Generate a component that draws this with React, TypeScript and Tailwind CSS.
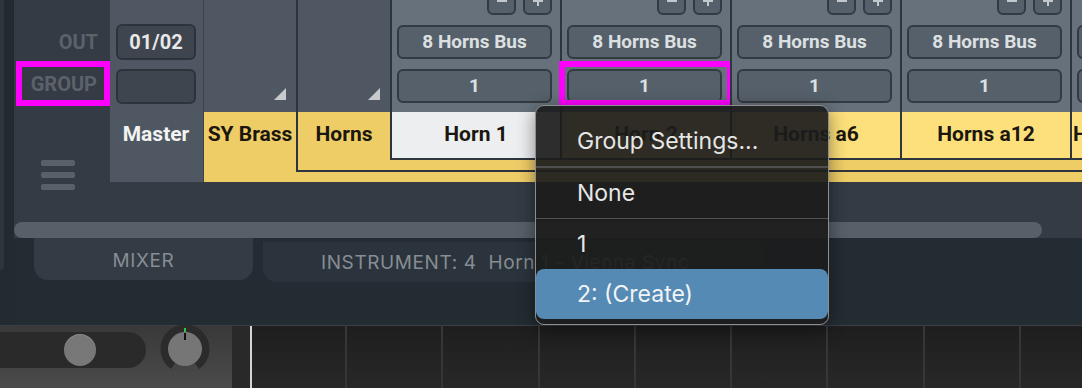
import React from 'react';

const HORN_COLUMNS = [
  { name: 'Horn 1', cell: 'bg-[#eceef0]', marked: false, left: false },
  { name: 'Horn 2', cell: 'bg-[#fde07b]', marked: true, left: false },
  { name: 'Horns a6', cell: 'bg-[#fde07b]', marked: false, left: false },
  { name: 'Horns a12', cell: 'bg-[#fde07b]', marked: false, left: false },
  { name: 'Horns a24 Rips', cell: 'bg-[#fde07b]', marked: false, left: true },
];

const GRID_CELLS = [0, 1, 2, 3, 4, 5, 6, 7, 8];

const Corner = () => (
  <svg width="12" height="12" viewBox="0 0 12 12">
    <path d="M12 0V12H0Z" fill="#c8cacd" />
  </svg>
);

const MiniButton = ({ plus }: { plus?: boolean }) => (
  <div className="-mt-[13px] h-[28px] w-[29px] rounded-[6px] border-2 border-[#343a41] bg-[#56606a] flex items-center justify-center">
    <svg width="12" height="12" viewBox="0 0 12 12">
      <path d={plus ? 'M1 6H11M6 1V11' : 'M1 6H11'} stroke="#c3c8cc" strokeWidth="2" />
    </svg>
  </div>
);

const HornColumn = ({ col }: { col: (typeof HORN_COLUMNS)[number] }) => (
  <div className="relative w-[170px] shrink-0 border-l-2 border-[#2f353c] flex flex-col">
    <div className="h-[112px] shrink-0 bg-[#66717b] flex flex-col pl-[5px] pr-[8px] font-[family-name:Roboto,sans-serif] font-bold text-[19px] text-[#dde0e3]">
      <div className="flex justify-end gap-[7px]">
        <MiniButton />
        <MiniButton plus />
      </div>
      <div className="mt-[10px] h-[34px] shrink-0 rounded-[6px] border-2 border-[#343a41] bg-[#56606a] flex items-center justify-center whitespace-nowrap">
        8 Horns Bus
      </div>
      <div className="mt-[10px] h-[34px] shrink-0 rounded-[6px] border-2 border-[#343a41] bg-[#56606a] flex items-center justify-center">
        1
      </div>
    </div>
    <div
      className={`h-[46px] shrink-0 ${col.cell} flex items-center ${col.left ? 'justify-start pl-[1px]' : 'justify-center'} whitespace-nowrap overflow-hidden font-[family-name:Roboto,sans-serif] font-bold text-[21px] text-[#1b1710]`}
    >
      {col.name}
    </div>
    {col.marked && (
      <div className="absolute -left-[3px] top-[61px] w-[174px] h-[45px] border-[6px] border-[#ff00ff]" />
    )}
  </div>
);

const GroupMenu = () => (
  <div className="absolute left-[535px] top-[105px] w-[294px] h-[220px] rounded-[9px] border border-[#8e8e8e] bg-[#1c1c1c]/[0.92] shadow-[0_4px_18px_rgba(0,0,0,0.45)] flex flex-col font-[family-name:Inter,sans-serif] text-[23px] text-[#e6e6e6] overflow-hidden">
    <div className="h-[60px] shrink-0 pt-[10px] pl-[41px] flex items-center whitespace-nowrap">Group Settings...</div>
    <div className="h-[2px] shrink-0 bg-[#4f4f4f]" />
    <div className="h-[50px] shrink-0 pl-[41px] flex items-center">None</div>
    <div className="h-[1px] shrink-0 bg-[#505050]" />
    <div className="h-[50px] shrink-0 pl-[41px] flex items-center">1</div>
    <div className="h-[50px] shrink-0 pl-[41px] flex items-center rounded-[8px] bg-[#558ab4] text-[#f2f4f6]">2: (Create)</div>
  </div>
);

export default function App() {
  return (
    <div className="relative w-[1082px] h-[388px] overflow-hidden bg-[#232c33]">
      <div className="h-[325px] flex">
        {/* left edge */}
        <div className="w-[14px] shrink-0 flex bg-[#232a30]">
          <div className="w-[4px] h-[270px] rounded-br-[4px] bg-[#2e353c]" />
        </div>

        <div className="flex-1 flex flex-col min-w-0">
          {/* mixer panel */}
          <div className="h-[238px] shrink-0 bg-[#343b44] flex flex-col">
            <div className="h-[182px] shrink-0 flex">
              {/* row labels */}
              <div className="w-[96px] shrink-0 flex flex-col font-[family-name:Roboto,sans-serif] font-bold text-[20px] text-[#5b626a]">
                <div className="mt-[25px] h-[34px] shrink-0 pr-[12px] flex items-center justify-end">OUT</div>
                <div className="mt-[2px] ml-[2px] h-[45px] shrink-0 pr-[7px] border-[6px] border-[#ff00ff] flex items-center justify-end">
                  GROUP
                </div>
                <div className="mt-[54px] ml-[27px] shrink-0 flex flex-col gap-[6px]">
                  <div className="w-[34px] h-[6px] rounded-[2px] bg-[#59606a]" />
                  <div className="w-[34px] h-[6px] rounded-[2px] bg-[#59606a]" />
                  <div className="w-[34px] h-[6px] rounded-[2px] bg-[#59606a]" />
                </div>
              </div>

              {/* master */}
              <div className="w-[93px] shrink-0 bg-[#4f5862] flex flex-col pl-[6px] pr-[7px] font-[family-name:Roboto,sans-serif] font-bold">
                <div className="mt-[24px] h-[36px] shrink-0 rounded-[6px] border-2 border-[#2d333a] bg-[#3e454e] flex items-center justify-center text-[20px] text-[#e8e8e8]">
                  01/02
                </div>
                <div className="mt-[9px] h-[35px] shrink-0 rounded-[6px] border-2 border-[#2d333a] bg-[#3e454e]" />
                <div className="mt-[8px] h-[46px] shrink-0 flex items-center justify-center text-[21px] text-[#f3f3f3]">Master</div>
              </div>

              {/* SY Brass */}
              <div className="w-[93px] shrink-0 border-l border-[#3c434b] flex flex-col">
                <div className="h-[112px] shrink-0 bg-[#4f5862] flex items-end justify-end pr-[10px] pb-[12px]">
                  <Corner />
                </div>
                <div className="flex-1 bg-[#efcd66]">
                  <div className="h-[46px] flex items-center justify-center whitespace-nowrap font-[family-name:Roboto,sans-serif] font-bold text-[21px] text-[#1b1710]">
                    SY Brass
                  </div>
                </div>
              </div>

              {/* Horns group */}
              <div className="flex-1 min-w-0 flex flex-col overflow-hidden bg-[#efcd66]">
                <div className="h-[172px] shrink-0 flex border-l-2 border-b-2 border-[#2f353c]">
                  <div className="w-[92px] shrink-0 flex flex-col">
                    <div className="h-[112px] shrink-0 bg-[#4f5862] flex items-end justify-end pr-[10px] pb-[12px]">
                      <Corner />
                    </div>
                    <div className="h-[46px] shrink-0 flex items-center justify-center font-[family-name:Roboto,sans-serif] font-bold text-[21px] text-[#1b1710]">
                      Horns
                    </div>
                  </div>
                  <div className="flex-1 flex flex-col">
                    <div className="h-[160px] shrink-0 flex border-b-2 border-[#2f353c]">
                      {HORN_COLUMNS.map((col) => (
                        <HornColumn key={col.name} col={col} />
                      ))}
                    </div>
                  </div>
                </div>
              </div>
            </div>

            <div className="mt-[40px] h-[16px] w-[1028px] shrink-0 rounded-full bg-[#575f68]" />
          </div>

          {/* tabs */}
          <div className="flex-1 flex items-start font-[family-name:Inter,sans-serif] text-[19px] tracking-[0.6px] text-[#878d93]">
            <div className="ml-[20px] w-[219px] h-[42px] shrink-0 pt-[5px] rounded-b-[14px] bg-[#333b44] flex items-center justify-center">
              MIXER
            </div>
            <div className="ml-[10px] mt-[4px] w-[500px] h-[40px] shrink-0 pt-[3px] rounded-b-[14px] bg-[#2b343c] flex items-center pl-[58px] whitespace-pre">
              {'INSTRUMENT: 4  Horn 1 - Vienna Sync'}
            </div>
          </div>
        </div>
      </div>

      {/* arranger strip */}
      <div className="h-[63px] flex border-t border-[#3a4047]">
        <div className="w-[232px] shrink-0 flex items-start bg-linear-to-b from-[#393939] to-[#4b4b4b]">
          <div className="mt-[6px] w-[146px] h-[36px] shrink-0 rounded-r-full bg-[#2a2a2a] flex items-center">
            <div className="ml-[64px] w-[32px] h-[32px] rounded-full bg-[#787878] shadow-[inset_0_1px_0_rgba(255,255,255,0.15)]" />
          </div>
          <svg className="ml-[14px] -mt-[1px] shrink-0" width="50" height="50" viewBox="0 0 50 50">
            <path d="M13.24 40.79A20.5 20.5 0 1 1 36.76 40.79" fill="none" stroke="#2b2b2b" strokeWidth="8" />
            <circle cx="25" cy="24" r="17" fill="#767676" />
            <path d="M25 3V7" stroke="#3cbf45" strokeWidth="2" />
            <path d="M25 8V15" stroke="#111111" strokeWidth="2" />
          </svg>
        </div>
        <div className="w-[18px] shrink-0 bg-[#292929]" />
        <div className="w-[2px] shrink-0 bg-[#d4d4d4]" />
        <div className="flex-1 min-w-0 flex overflow-hidden bg-linear-to-b from-[#1e1e1e] to-[#282828]">
          <div className="w-[93px] shrink-0" />
          {GRID_CELLS.map((i) => (
            <div key={i} className="w-[96.3px] shrink-0 border-l-2 border-[#363636]" />
          ))}
        </div>
      </div>

      <GroupMenu />
    </div>
  );
}
